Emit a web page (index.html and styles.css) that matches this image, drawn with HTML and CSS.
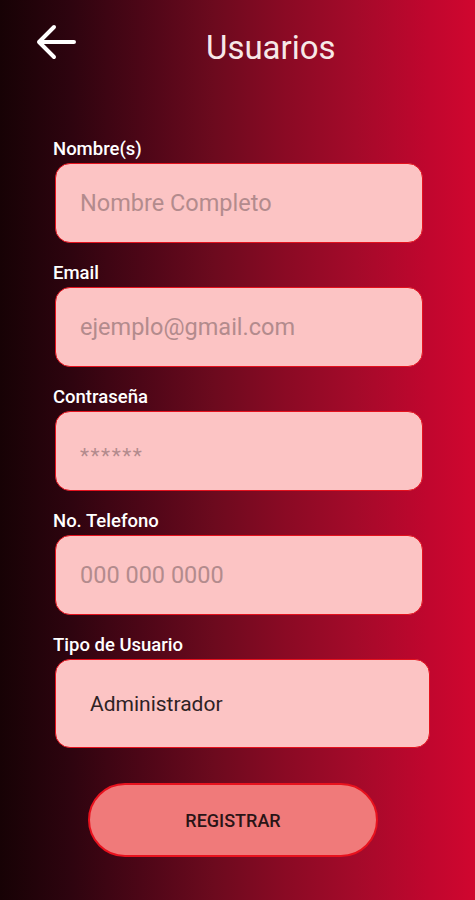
FILE: index.html
```html
<!DOCTYPE html>
<html>
<head>
<meta charset="utf-8">
<link rel="stylesheet" href="styles.css">
</head>
<body>
<div class="screen">
  <header class="header">
    <div class="back">
      <svg width="40" height="38" viewBox="0 0 40 38"><path d="M3 19 H38 M18 4 L3 19 L18 34" fill="none" stroke="#fff" stroke-width="4" stroke-linecap="round" stroke-linejoin="round"/></svg>
    </div>
    <h1 class="title">Usuarios</h1>
  </header>
  <form class="form">
    <div class="field">
      <label class="label">Nombre(s)</label>
      <div class="input"><span class="ph">Nombre Completo</span></div>
    </div>
    <div class="field">
      <label class="label">Email</label>
      <div class="input"><span class="ph">ejemplo@gmail.com</span></div>
    </div>
    <div class="field">
      <label class="label">Contraseña</label>
      <div class="input"><span class="ph stars">******</span></div>
    </div>
    <div class="field">
      <label class="label">No. Telefono</label>
      <div class="input"><span class="ph">000 000 0000</span></div>
    </div>
    <div class="field">
      <label class="label">Tipo de Usuario</label>
      <div class="input select"><span class="val">Administrador</span></div>
    </div>
    <div class="btn-row">
      <div class="btn">REGISTRAR</div>
    </div>
  </form>
</div>
</body>
</html>
```
FILE: styles.css
```css
* { box-sizing: border-box; }
html, body { margin: 0; padding: 0; }
body {
  width: 475px;
  height: 900px;
  overflow: hidden;
  font-family: Roboto, "Liberation Sans", sans-serif;
}
.screen {
  width: 475px;
  height: 900px;
  background: linear-gradient(to right, #170205 0%, #2e040f 15%, #4d0617 30%, #6c0a1e 45%, #8a0a24 60%, #a40a2a 75%, #c0062e 90%, #d0062f 100%);
}
.header {
  display: flex;
  align-items: center;
  height: 92px;
  padding: 0 0 0 36px;
}
.back { width: 40px; height: 38px; margin-top: -8px; }
.title {
  margin: 2px 0 0 130px;
  font-weight: 400;
  font-size: 33px;
  color: #f7e8e8;
}
.form {
  padding: 48px 0 0 53px;
  display: flex;
  flex-direction: column;
}
.field { margin-bottom: 21px; }
.label {
  display: block;
  color: #fff;
  font-size: 18.5px;
  font-weight: 500;
  line-height: 18px;
  height: 23px;
}
.input {
  width: 368px;
  height: 80px;
  margin-left: 2px;
  background: #fcc4c4;
  border: 1.5px solid #e4121e;
  border-radius: 15px;
  display: flex;
  align-items: center;
  padding-left: 24px;
}
.ph {
  color: #b38b8d;
  font-size: 23.5px;
}
.stars { font-size: 21px; letter-spacing: 1.5px; padding-top: 10px; }
.select {
  width: 375px;
  height: 89px;
  padding-left: 34px;
}
.val { color: #2e2224; font-size: 21px; }
.btn-row { padding: 14px 0 0 35px; }
.btn {
  width: 290px;
  height: 74px;
  border-radius: 37px;
  background: #f07a7a;
  border: 2px solid #e8121e;
  display: flex;
  align-items: center;
  justify-content: center;
  color: #2a1416;
  font-size: 18px;
  font-weight: 500;
}
```
